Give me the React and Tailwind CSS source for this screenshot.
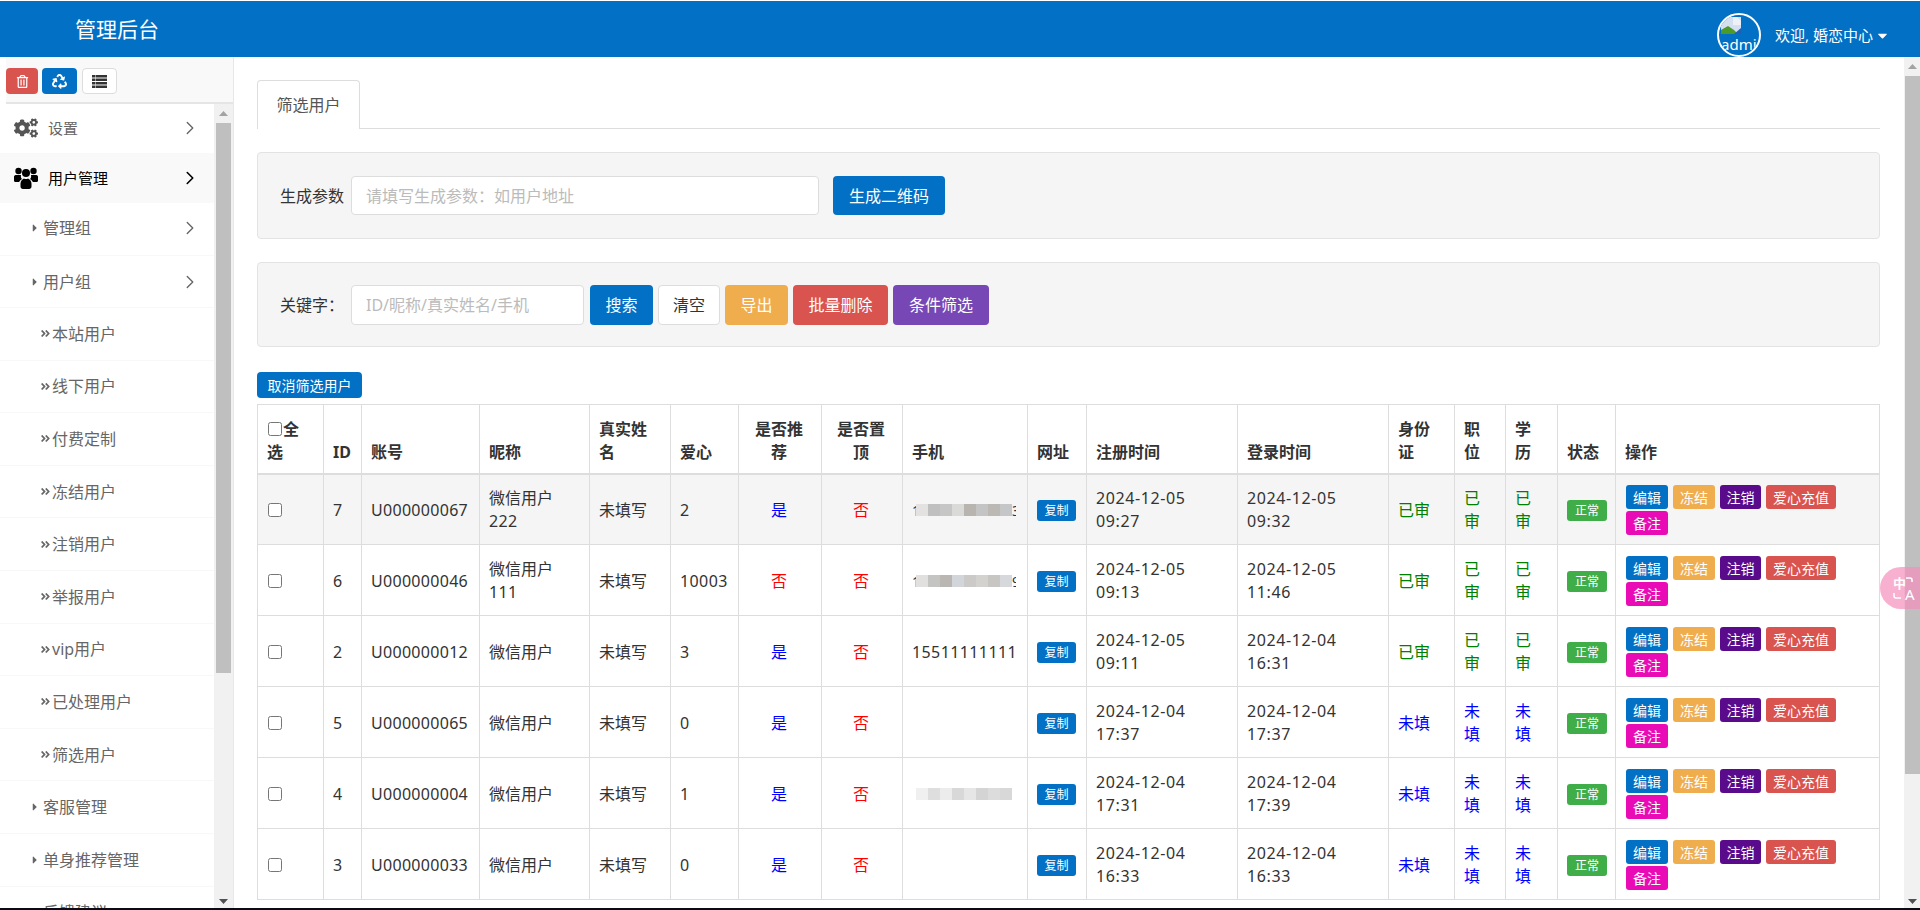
import React from 'react';
import { ChevronRight } from 'lucide-react';
import {
  FaRegTrashAlt,
  FaRecycle,
  FaCogs,
  FaCaretRight,
  FaCaretDown,
  FaAngleDoubleRight,
} from 'react-icons/fa';

const SUB_ITEMS = ['本站用户', '线下用户', '付费定制', '冻结用户', '注销用户', '举报用户', 'vip用户', '已处理用户', '筛选用户'];

const USERS = [
  { id: 7, account: 'U000000067', nick: '微信用户', suffix: '222', hearts: '2', recommend: true, phone: 'a', reg: ['2024-12-05', '09:27'], login: ['2024-12-05', '09:32'], checked: true },
  { id: 6, account: 'U000000046', nick: '微信用户', suffix: '111', hearts: '10003', recommend: false, phone: 'b', reg: ['2024-12-05', '09:13'], login: ['2024-12-05', '11:46'], checked: true },
  { id: 2, account: 'U000000012', nick: '微信用户', hearts: '3', recommend: true, phone: '15511111111', reg: ['2024-12-05', '09:11'], login: ['2024-12-04', '16:31'], checked: true },
  { id: 5, account: 'U000000065', nick: '微信用户', hearts: '0', recommend: true, phone: '', reg: ['2024-12-04', '17:37'], login: ['2024-12-04', '17:37'], checked: false },
  { id: 4, account: 'U000000004', nick: '微信用户', hearts: '1', recommend: true, phone: 'c', reg: ['2024-12-04', '17:31'], login: ['2024-12-04', '17:39'], checked: false },
  { id: 3, account: 'U000000033', nick: '微信用户', hearts: '0', recommend: true, phone: '', reg: ['2024-12-04', '16:33'], login: ['2024-12-04', '16:33'], checked: false },
];

const COL_WIDTHS = [66, 38, 118, 110, 81, 68, 83, 81, 125, 59, 151, 151, 66, 51, 52, 58, 264];

const MOSAICS = {
  a: { head: '1', tail: '3', cells: ['bg-[#e4e2e0]', 'bg-[#bfbfc0]', 'bg-[#c6c6c6]', 'bg-[#dadad8]', 'bg-[#b8b4b0]', 'bg-[#c4c4c4]', 'bg-[#bcb8b4]', 'bg-[#c4c6c8]'] },
  b: { head: '1', tail: '9', cells: ['bg-[#e2e0de]', 'bg-[#c4c4c2]', 'bg-[#bab6b2]', 'bg-[#d2d6da]', 'bg-[#cccac8]', 'bg-[#d4d2ce]', 'bg-[#c8c6c2]', 'bg-[#d6d8dc]'] },
  c: { head: '', tail: '', cells: ['bg-[#f0f0f0]', 'bg-[#dedede]', 'bg-[#ececec]', 'bg-[#d8d8d8]', 'bg-[#e6e6e6]', 'bg-[#d4d4d4]', 'bg-[#dcdcdc]', 'bg-[#d8d8d8]'] },
};

const btn = 'h-full rounded-[4px] text-[16px] text-white';
const thBase = 'border border-[#ddd] border-b-2 pl-[9px] pr-[11px] pb-[9px] align-bottom text-[16px] leading-[23px] font-bold';
const th = `${thBase} text-left`;
const cell = 'border border-[#ddd] pt-[2px] align-middle text-[16px] leading-[23px]';
const td = `${cell} pl-[9px] pr-[11px]`;
const tdWide = `${cell} pl-[10px] pr-[8px]`;

const UsersIcon = () => (
  <svg viewBox="0 0 24 22" className="mr-[10px] h-[22px] w-[24px]" fill="currentColor">
    <circle cx="4.5" cy="4" r="3.2" />
    <circle cx="19.5" cy="4" r="3.2" />
    <circle cx="12" cy="6" r="4" />
    <path d="M0 9.5C0 8.6 1 8 2.5 8H7C6.6 10 7 11 8 12C6.5 13 5.5 14 5.2 15H1.5C0.5 15 0 14.4 0 13.5z" />
    <path d="M24 9.5C24 8.6 23 8 21.5 8H17C17.4 10 17 11 16 12C17.5 13 18.500 14 18.800 15H22.500C23.500 15 24 14.400 24 13.500z" />
    <path d="M6.500 16.500C6.500 14 8.500 12 10 11.500C11 12.200 13 12.200 14 11.500C15.500 12 17.500 14 17.500 16.500V19.500C17.500 21 16.500 22 15 22H9C7.500 22 6.500 21 6.500 19.500z" />
  </svg>
);

const ListIcon = () => (
  <svg width="15" height="13" viewBox="0 0 15 13" fill="currentColor">
    <rect x="0" y="0" width="3" height="2.500" />
    <rect x="3.500" y="0" width="11.500" height="2.500" />
    <rect x="0" y="3.500" width="3" height="2.500" />
    <rect x="3.500" y="3.500" width="11.500" height="2.500" />
    <rect x="0" y="7" width="3" height="2.500" />
    <rect x="3.500" y="7" width="11.500" height="2.500" />
    <rect x="0" y="10.500" width="3" height="2.500" />
    <rect x="3.500" y="10.500" width="11.500" height="2.500" />
  </svg>
);

const Phone = ({ value }) => {
  const mosaic = MOSAICS[value];
  if (!mosaic) return <span className="tracking-[0.4px]">{value}</span>;
  return (
    <div className="flex h-[13px] items-center overflow-hidden">
      <span className="w-[4px] overflow-hidden text-[14px]">{mosaic.head}</span>
      {mosaic.cells.map((bg, i) => (
        <div key={i} className={`h-[12px] w-[12px] ${bg}`} />
      ))}
      <span className="w-[4px] overflow-hidden text-[14px]">{mosaic.tail}</span>
    </div>
  );
};

const Scrollbar = ({ thumbClass, trackClass }) => (
  <div className={`flex flex-col bg-[#f1f1f1] ${trackClass}`}>
    <div className="flex h-[19px] shrink-0 items-center justify-center">
      <svg width="9" height="5" viewBox="0 0 9 5"><path d="M4.5 0L9 5H0z" fill="#a3a3a3" /></svg>
    </div>
    <div className={`mx-auto w-[15px] bg-[#bfbfbf] ${thumbClass}`} />
    <div className="flex-1" />
    <div className="flex h-[14px] shrink-0 items-center justify-center">
      <svg width="9" height="5" viewBox="0 0 9 5"><path d="M4.5 5L9 0H0z" fill="#505050" /></svg>
    </div>
  </div>
);

const Sidebar = () => (
  <aside className="flex h-full w-[234px] shrink-0 flex-col overflow-hidden border-r border-[#e7e7e7]">
    <div className="ml-[6px] flex h-[47px] shrink-0 items-start gap-[4px] border-b-2 border-[#e5e5e5] bg-[#f9f9f9] pt-[11px]">
      <button className="flex h-[26px] w-[32px] items-center justify-center rounded-[4px] bg-[#d9534f] text-[13px] text-white">
        <FaRegTrashAlt />
      </button>
      <button className="flex h-[26px] w-[35px] items-center justify-center rounded-[4px] bg-[#0170c5] text-[15px] text-white">
        <FaRecycle />
      </button>
      <button className="ml-[1px] flex h-[26px] w-[35px] items-center justify-center rounded-[4px] border border-[#ddd] bg-white text-[#333]">
        <ListIcon />
      </button>
    </div>
    <div className="flex min-h-0 flex-1">
      <nav className="w-[214px] shrink-0 overflow-hidden">
        <div className="flex h-[49px] items-center pb-[1px] pl-[14px] pr-[13px] text-[15px] text-[#666]">
          <FaCogs className="mr-[10px] h-[24px] w-[24px] text-[#555]" />
          <span className="flex-1">设置</span>
          <ChevronRight size={22} strokeWidth={1.5} />
        </div>
        <div className="flex h-[50px] items-center bg-[#f9f9f9] pl-[14px] pr-[13px] text-[15px] text-black">
          <UsersIcon />
          <span className="flex-1">用户管理</span>
          <ChevronRight size={22} strokeWidth={1.75} />
        </div>
        <div className="flex h-[52.5px] items-center border-b border-[#f8f8f8] pb-[2px] pl-[29px] pr-[13px] text-[16px] text-[#666]">
          <FaCaretRight className="mr-[2px] text-[12px]" />
          <span className="flex-1">管理组</span>
          <ChevronRight size={22} strokeWidth={1.5} />
        </div>
        <div className="flex h-[52.5px] items-center border-b border-[#f8f8f8] pt-[2px] pl-[29px] pr-[13px] text-[16px] text-[#666]">
          <FaCaretRight className="mr-[2px] text-[12px]" />
          <span className="flex-1">用户组</span>
          <ChevronRight size={22} strokeWidth={1.5} />
        </div>
        {SUB_ITEMS.map((label) => (
          <div key={label} className="flex h-[52.6px] items-center border-b border-[#f8f8f8] pl-[40px] text-[16px] text-[#666]">
            <FaAngleDoubleRight className="mr-[1px] text-[11px]" />
            <span>{label}</span>
          </div>
        ))}
        {['客服管理', '单身推荐管理', '反馈建议'].map((label) => (
          <div key={label} className="flex h-[52.6px] items-center border-b border-[#f8f8f8] pl-[29px] text-[16px] text-[#666]">
            <FaCaretRight className="mr-[2px] text-[12px]" />
            <span>{label}</span>
          </div>
        ))}
      </nav>
      <Scrollbar trackClass="w-[19px]" thumbClass="h-[550px]" />
    </div>
  </aside>
);

const FilterBar = ({ className, children }) => (
  <div className={`flex w-[1623px] items-center rounded-[4px] border border-[#e3e3e3] bg-[#f5f5f5] pl-[22px] ${className}`}>
    {children}
  </div>
);

const Table = () => (
  <table className="w-[1623px] table-fixed border-collapse text-[#333]">
    <colgroup>
      {COL_WIDTHS.map((w, i) => (
        <col key={i} style={{ width: w }} />
      ))}
    </colgroup>
    <thead>
      <tr className="h-[69px]">
        <th className={th}>
          <input type="checkbox" className="mr-[1px] ml-[1px] h-[14px] w-[14px] align-[-1px]" readOnly />全选
        </th>
        <th className={th}>ID</th>
        <th className={th}>账号</th>
        <th className={th}>昵称</th>
        <th className={th}>真实姓名</th>
        <th className={th}>爱心</th>
        <th className={`${thBase} text-center`}>是否推荐</th>
        <th className={`${thBase} text-center`}>是否置顶</th>
        <th className={th}>手机</th>
        <th className={th}>网址</th>
        <th className={th}>注册时间</th>
        <th className={th}>登录时间</th>
        <th className={th}>身份证</th>
        <th className={th}>职位</th>
        <th className={th}>学历</th>
        <th className={th}>状态</th>
        <th className={th}>操作</th>
      </tr>
    </thead>
    <tbody>
      {USERS.map((u, i) => {
        const audit = u.checked ? 'text-[#008000]' : 'text-[#0000ff]';
        const auditText = u.checked ? '已审' : '未填';
        return (
          <tr key={u.id} className={`h-[71px] ${i === 0 ? 'bg-[#f5f5f5]' : ''}`}>
            <td className={tdWide}>
              <input type="checkbox" className="block h-[14px] w-[14px]" readOnly />
            </td>
            <td className={td}>{u.id}</td>
            <td className={`${td} tracking-[0.3px]`}>{u.account}</td>
            <td className={td}>
              {u.nick}
              {u.suffix && <span className="block tracking-[0.4px]">{u.suffix}</span>}
            </td>
            <td className={td}>未填写</td>
            <td className={`${td} tracking-[0.4px]`}>{u.hearts}</td>
            <td className={`${td} text-center ${u.recommend ? 'text-[#0000ff]' : 'text-[#ff0000]'}`}>
              {u.recommend ? '是' : '否'}
            </td>
            <td className={`${td} text-center text-[#ff0000]`}>否</td>
            <td className={td}>
              <Phone value={u.phone} />
            </td>
            <td className={td}>
              <button className="block h-[21px] w-[39px] rounded-[3px] bg-[#0170c5] text-[12px] leading-[21px] text-white">复制</button>
            </td>
            <td className={`${td} tracking-[0.6px]`}>{u.reg[0]}<br />{u.reg[1]}</td>
            <td className={`${td} tracking-[0.6px]`}>{u.login[0]}<br />{u.login[1]}</td>
            <td className={`${td} ${audit}`}>{auditText}</td>
            <td className={`${td} ${audit}`}>{auditText}</td>
            <td className={`${td} ${audit}`}>{auditText}</td>
            <td className={td}>
              <span className="block h-[21px] w-[40px] rounded-[3px] bg-[#3fae49] text-center text-[12px] leading-[21px] text-white">正常</span>
            </td>
            <td className={tdWide}>
              <div className="flex flex-wrap gap-x-[5px] gap-y-[2px]">
                <button className="h-[24px] w-[42px] rounded-[3px] bg-[#0170c5] text-[14px] text-white">编辑</button>
                <button className="h-[24px] w-[42px] rounded-[3px] bg-[#f0ad4e] text-[14px] text-white">冻结</button>
                <button className="h-[24px] w-[41px] rounded-[3px] bg-[#5a0b8c] text-[14px] text-white">注销</button>
                <button className="h-[24px] w-[70px] rounded-[3px] bg-[#d9534f] text-[14px] text-white">爱心充值</button>
                <button className="h-[24px] w-[42px] rounded-[3px] bg-[#e80bb6] text-[14px] text-white">备注</button>
              </div>
            </td>
          </tr>
        );
      })}
    </tbody>
  </table>
);

export default function App() {
  return (
    <div className="relative flex h-[910px] flex-col overflow-hidden bg-white font-['Noto_Sans','Noto_Sans_CJK_SC',sans-serif] text-[#333]">
      <header className="mt-[1px] flex h-[56px] shrink-0 items-center justify-between bg-[#0170c5] text-white">
        <h1 className="ml-[75px] text-[21px] leading-none font-normal">管理后台</h1>
        <div className="mr-[30px] flex items-end self-end">
          <div className="h-[44px] w-[44px] overflow-hidden rounded-full border-2 border-white">
            <svg width="20" height="17" viewBox="0 0 20 17" className="ml-[2px] mt-[2px]">
              <rect width="20" height="17" fill="#d4e0f0" />
              <path d="M0 17V13L7 9L13 13L17 17z" fill="#4c9a2a" />
              <path d="M13 17L20 11V17z" fill="#1f5fb5" />
              <path d="M12 0H16L20 4V8H12z" fill="#eef2f8" />
            </svg>
            <div className="ml-[2px] text-[15px] leading-[20px] whitespace-nowrap">admin</div>
          </div>
          <div className="mb-[10px] ml-[14px] flex items-center text-[15px] leading-[24px]">
            欢迎, 婚恋中心
            <FaCaretDown className="ml-[2px] text-[15px]" />
          </div>
        </div>
      </header>

      <div className="flex min-h-0 flex-1">
        <Sidebar />
        <main className="min-w-0 flex-1 overflow-hidden pl-[23px]">
          <div className="flex h-[72px] w-[1623px] items-end border-b border-[#ddd]">
            <div className="-mb-[1px] flex h-[49px] w-[103px] items-center justify-center rounded-t-[4px] border border-b-0 border-[#ddd] bg-white text-[16px] text-[#555]">
              筛选用户
            </div>
          </div>
          <FilterBar className="mt-[23px] h-[87px]">
            <span className="w-[71px] text-[16px]">生成参数</span>
            <input
              readOnly
              placeholder="请填写生成参数：如用户地址"
              className="h-[39px] w-[468px] rounded-[4px] border border-[#ddd] bg-white px-[14px] text-[16px] outline-none placeholder:text-[#bbb]"
            />
            <div className="ml-[14px] h-[39px] w-[112px]">
              <button className={`w-full bg-[#0170c5] ${btn}`}>生成二维码</button>
            </div>
          </FilterBar>
          <FilterBar className="mt-[23px] h-[85px]">
            <span className="w-[71px] text-[16px]">关键字：</span>
            <input
              readOnly
              placeholder="ID/昵称/真实姓名/手机"
              className="h-[40px] w-[233px] rounded-[4px] border border-[#ddd] bg-white px-[14px] text-[16px] outline-none placeholder:text-[#bbb]"
            />
            <div className="ml-[6px] flex h-[40px] gap-[5px]">
              <button className={`w-[63px] bg-[#0170c5] ${btn}`}>搜索</button>
              <button className="h-full w-[62px] rounded-[4px] border border-[#ddd] bg-white text-[16px] text-[#333]">清空</button>
              <button className={`w-[63px] bg-[#f0ad4e] ${btn}`}>导出</button>
              <button className={`w-[95px] bg-[#d9534f] ${btn}`}>批量删除</button>
              <button className={`w-[96px] bg-[#7647b5] ${btn}`}>条件筛选</button>
            </div>
          </FilterBar>
          <button className="mt-[25px] block h-[26px] w-[105px] rounded-[4px] bg-[#0170c5] text-[14px] text-white">取消筛选用户</button>
          <div className="mt-[6px]">
            <Table />
          </div>
        </main>
        <Scrollbar trackClass="w-[16px] h-full" thumbClass="h-[698px]" />
      </div>

      <div className="h-[2px] shrink-0 bg-[#0b0b16]" />

      {/* floating translate widget */}
      <div className="absolute left-[1880px] top-[567px] h-[42px] w-[40px] rounded-l-[21px] bg-[#f58fbd]/70 font-bold text-white">
        <span className="absolute left-[13px] top-[8px] text-[13px] leading-[16px]">中</span>
        <span className="absolute left-[25px] top-[18px] text-[15px] leading-[18px] font-normal">A</span>
        <svg width="26" height="24" viewBox="0 0 26 24" className="absolute left-[12px] top-[10px]" fill="none" stroke="#fff" strokeWidth="1.5">
          <path d="M14 1H18C19 1 20 2 20 3V5" />
          <path d="M2 16V19C2 20 3 21 4 21H9" />
        </svg>
      </div>
    </div>
  );
}
